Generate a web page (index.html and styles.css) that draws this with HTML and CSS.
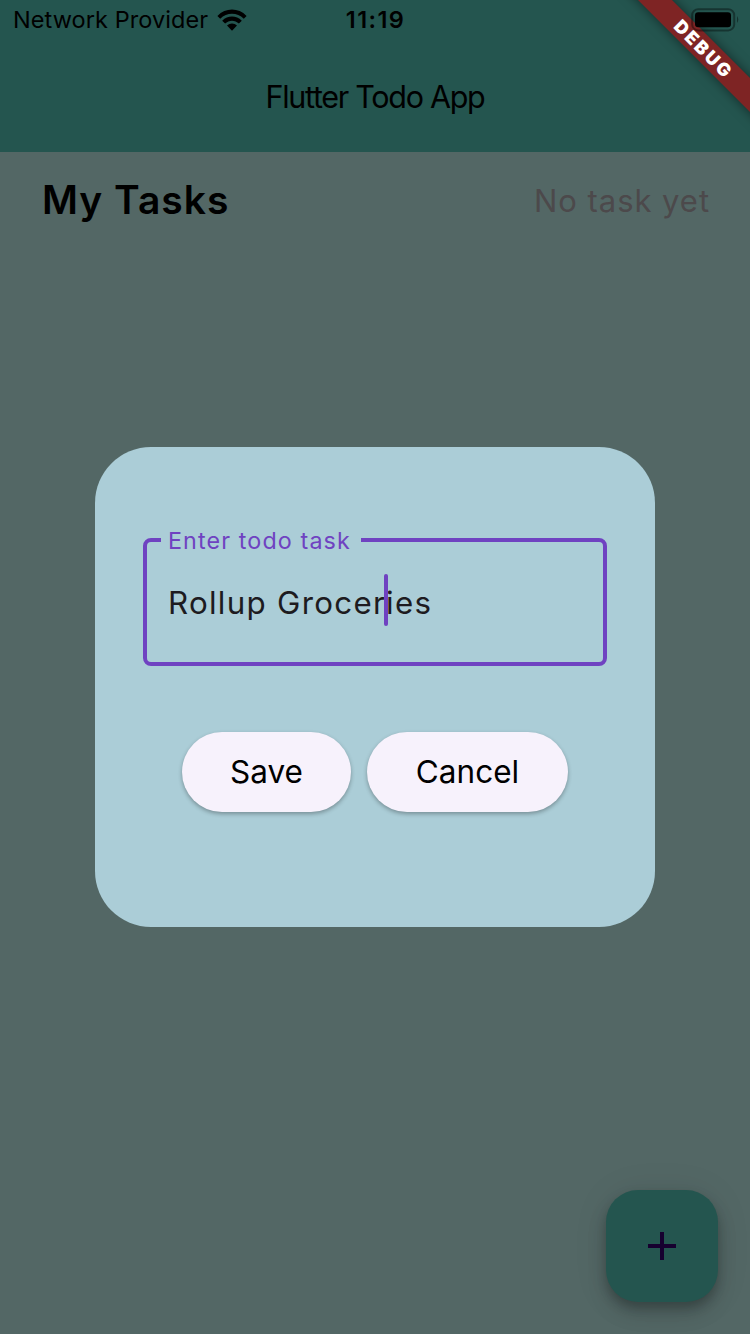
FILE: index.html
```html
<!DOCTYPE html>
<html lang="en">
<head>
<meta charset="utf-8">
<title>Flutter Todo App</title>
<link rel="stylesheet" href="styles.css">
</head>
<body>
<div class="screen">
  <header class="app-header">
    <div class="status-bar">
      <div class="carrier">
        <span class="carrier-name">Network Provider</span>
        <svg class="wifi" width="30" height="22" viewBox="0 0 30 22">
          <path d="M0.4 6.9 C8.6 -1.5 21.4 -1.5 29.6 6.9 L26.8 9.8 C20.2 3 9.8 3 3.2 9.8 Z"/>
          <path d="M5.2 11.7 C10.7 6.2 19.3 6.2 24.8 11.7 L21.9 14.6 C18 10.7 12 10.7 8.1 14.6 Z"/>
          <path d="M10 16.6 C12.9 13.8 17.1 13.8 20 16.6 L15 21.7 Z"/>
        </svg>
      </div>
      <time class="clock">11:19</time>
      <svg class="battery" width="48" height="24" viewBox="0 0 48 24">
        <rect class="battery-shell" x="1.2" y="1.2" width="42" height="21.2" rx="6"/>
        <rect x="4" y="4.2" width="36" height="15" rx="3.2"/>
        <path class="battery-cap" d="M46 8 Q48.6 11.5 46 15 Z"/>
      </svg>
    </div>
    <h1 class="app-title">Flutter Todo App</h1>
  </header>
  <main class="content">
    <div class="summary">
      <h2 class="summary-title">My Tasks</h2>
      <span class="summary-count">No task yet</span>
    </div>
    <section class="dialog">
      <fieldset class="field">
        <legend class="field-label">Enter todo task</legend>
        <div class="field-value"><span>Rollup Grocer</span><span class="caret"></span><span>ies</span></div>
      </fieldset>
      <div class="actions">
        <button class="action save">Save</button>
        <button class="action cancel">Cancel</button>
      </div>
    </section>
    <button class="fab" aria-label="Add task">
      <svg width="28" height="28" viewBox="0 0 28 28"><path d="M12 0h4v12h12v4H16v12h-4V16H0v-4h12z"/></svg>
    </button>
  </main>
  <div class="banner"><span>DEBUG</span></div>
</div>
</body>
</html>
```

FILE: styles.css
```css
* { box-sizing: border-box; }
body { margin: 0; font-family: Inter, "Liberation Sans", sans-serif; color: #000; }
h1, h2 { margin: 0; }
button { font: inherit; border: 0; padding: 0; color: #000; }
svg { display: block; }
.screen {
  position: relative;
  width: 750px;
  height: 1334px;
  overflow: hidden;
  display: flex;
  flex-direction: column;
  background: #536765;
}
.app-header { height: 152px; background: #24554f; }
.status-bar {
  height: 40px;
  padding: 0 11px 0 13px;
  display: grid;
  grid-template-columns: 1fr auto 1fr;
  grid-template-rows: 40px;
  align-items: center;
}
.carrier { display: flex; align-items: center; gap: 9px; }
.carrier-name { font-size: 23.5px; letter-spacing: 0.08px; white-space: nowrap; line-height: 42px; }
.clock { font-size: 23.5px; font-weight: 600; letter-spacing: 1.4px; line-height: 42px; margin-left: -1px; }
.battery { position: relative; z-index: 2; justify-self: end; }
.battery-shell { fill: none; stroke: #000; stroke-opacity: 0.38; stroke-width: 2; }
.battery-cap { fill-opacity: 0.42; }
.app-title {
  height: 112px;
  line-height: 113px;
  font-size: 30.5px;
  font-weight: 400;
  letter-spacing: -1.3px;
  text-align: center;
}
.content { flex: 1; display: flex; flex-direction: column; }
.summary {
  height: 96px;
  padding: 0 40px 0 42px;
  display: flex;
  justify-content: space-between;
  align-items: center;
}
.summary-title { font-size: 39px; font-weight: 600; letter-spacing: 1px; padding-bottom: 2px; }
.summary-count { font-size: 31px; font-weight: 400; letter-spacing: 0.95px; color: #4c494b; }
.dialog {
  width: 560px;
  height: 480px;
  margin: 199px auto 0;
  padding: 77px 48px 0;
  border-radius: 56px;
  background: #abcdd7;
}
.field {
  height: 142px;
  margin: 0;
  padding: 0 20px 0 21px;
  border: 4px solid #6f42c1;
  border-radius: 8px;
}
.field-label {
  height: 31px;
  margin-left: -7px;
  padding: 0 10px 0 7px;
  line-height: 34px;
  font-size: 23.3px;
  font-weight: 400;
  letter-spacing: 1.12px;
  color: #6f42c1;
}
.field-value {
  height: 60px;
  margin-top: 15px;
  display: flex;
  align-items: center;
  font-size: 31.3px;
  font-weight: 400;
  letter-spacing: 1.28px;
  color: #1d1b20;
}
.field-value span:not(.caret) { padding-top: 5px; }
.caret { width: 4px; height: 52px; margin: 0 -2px; border-radius: 2px; background: #6f42c1; z-index: 1; }
.actions { margin-top: 66px; display: flex; justify-content: center; gap: 16px; }
.action {
  height: 80px;
  padding-bottom: 2px;
  border-radius: 40px;
  background: #f7f2fc;
  font-size: 31.5px;
  font-weight: 400;
  box-shadow: 0 2px 4px rgba(0, 0, 0, 0.3);
}
.save { width: 169px; }
.cancel { width: 201px; }
.fab {
  width: 112px;
  height: 112px;
  margin: auto 32px 32px auto;
  display: grid;
  place-items: center;
  border-radius: 32px;
  background: #24554f;
  box-shadow: 0 6px 10px rgba(0, 0, 0, 0.18), 0 12px 20px rgba(0, 0, 0, 0.14), 0 2px 36px rgba(0, 0, 0, 0.08);
}
.fab svg { fill: #16002f; }
.banner {
  position: absolute;
  left: 582.5px;
  top: 35.5px;
  width: 240px;
  height: 24px;
  display: flex;
  align-items: center;
  justify-content: center;
  transform: rotate(45deg);
  background: #7e2424;
  box-shadow: 0 0 12px rgba(0, 0, 0, 0.5);
  color: #fff;
  font-size: 18px;
  font-weight: 900;
  letter-spacing: 2.4px;
  text-indent: 3px;
}
```
